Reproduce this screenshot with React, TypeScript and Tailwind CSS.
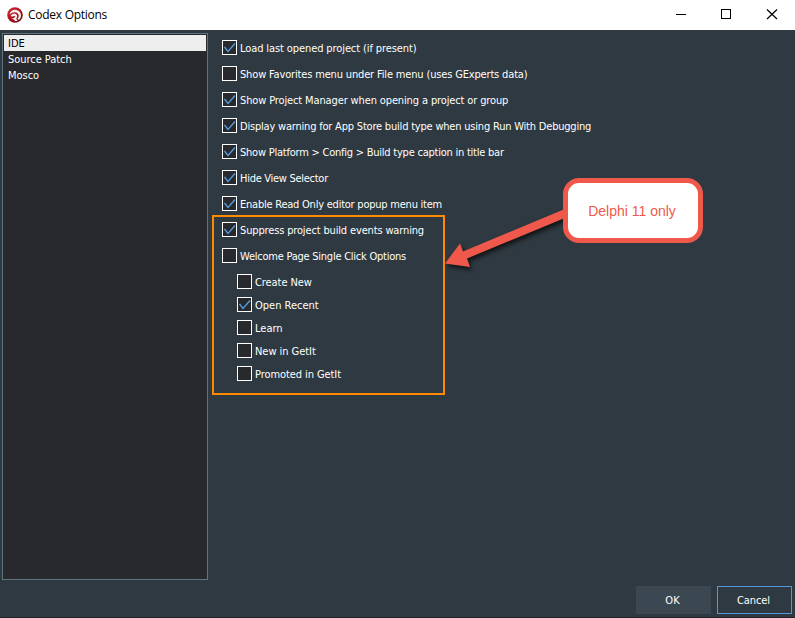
const TEXT = "font-['DejaVu_Sans_Condensed','DejaVu_Sans',sans-serif] [font-stretch:condensed]";

type Option = { label: string; checked?: boolean; tracking: string };

const options: Option[] = [
  { label: 'Load last opened project (if present)', checked: true, tracking: 'tracking-[-0.1px]' },
  { label: 'Show Favorites menu under File menu (uses GExperts data)', tracking: 'tracking-[-0.16px]' },
  { label: 'Show Project Manager when opening a project or group', checked: true, tracking: 'tracking-[-0.13px]' },
  { label: 'Display warning for App Store build type when using Run With Debugging', checked: true, tracking: 'tracking-[-0.2px]' },
  { label: 'Show Platform > Config > Build type caption in title bar', checked: true, tracking: 'tracking-[-0.23px]' },
  { label: 'Hide View Selector', checked: true, tracking: 'tracking-[-0.28px]' },
  { label: 'Enable Read Only editor popup menu item', checked: true, tracking: 'tracking-[-0.23px]' },
  { label: 'Suppress project build events warning', checked: true, tracking: 'tracking-[-0.15px]' },
  { label: 'Welcome Page Single Click Options', tracking: 'tracking-[-0.24px]' },
];

const welcomeOptions: Option[] = [
  { label: 'Create New', tracking: 'tracking-[-0.07px]' },
  { label: 'Open Recent', checked: true, tracking: 'tracking-[0px]' },
  { label: 'Learn', tracking: 'tracking-[0px]' },
  { label: 'New in GetIt', tracking: 'tracking-[-0.05px]' },
  { label: 'Promoted in GetIt', tracking: 'tracking-[-0.08px]' },
];

function Check({ label, checked, tracking }: Option) {
  return (
    <div className="flex h-[15px] items-center gap-[3px]">
      <span className="flex size-[15px] shrink-0 items-center justify-center border border-white bg-[#28292d]">
        {checked && (
          <svg width="13" height="13" viewBox="0 0 13 13" fill="none">
            <path d="M1.500 6 5 10.500 12 2.500" stroke="#559fe2" strokeWidth="1.300" />
          </svg>
        )}
      </span>
      <span className={`whitespace-nowrap pt-[2px] leading-[15px] ${tracking}`}>{label}</span>
    </div>
  );
}

function Logo() {
  return (
    <svg width="16" height="16" viewBox="0 0 16 16">
      <defs>
        <linearGradient id="badge" x1="0" y1="0" x2="1" y2="1">
          <stop offset="0" stopColor="#d52b38" />
          <stop offset="0.55" stopColor="#a80f1c" />
          <stop offset="1" stopColor="#5c0810" />
        </linearGradient>
      </defs>
      <circle cx="8" cy="8" r="7.8" fill="url(#badge)" />
      <path d="M2.400 7.400C3.200 3.800 6.700 2.200 9.800 3.100c3 .9 4.700 3.700 4.100 6.600-.3 1.400-1 2.500-1.900 3.300l-1.500-1.200c1.200-1.300 1.600-3 .8-4.500C10.300 5.500 8.400 4.900 6.500 5.400 4.800 5.800 3.400 6.600 2.400 7.400Z" fill="#f7eded" />
      <path d="M3.600 8.800 5.400 7.100 8 6.500l2 1.500.2 2.300-1.100 1.200 1.700 2.200-2.300.5-2.100-2-2.100-.4 2.500-.9 1.600-1.300-1.400-.7-2.100.9Z" fill="#f7eded" />
    </svg>
  );
}

export default function App() {
  return (
    <div className={`relative flex h-[618px] w-[795px] flex-col overflow-hidden border-b border-[#242226] bg-[#2f3941] text-[11px] text-white ${TEXT}`}>
      <header className="flex h-[30px] shrink-0 items-center bg-white pl-[7px] text-black">
        <Logo />
        <h1 className="ml-[5px] flex-1 font-['Open_Sans','Noto_Sans',sans-serif] text-[12px] tracking-[-0.27px] [font-stretch:normal]">Codex Options</h1>
        <svg width="120" height="30" viewBox="675 0 120 30" fill="none" stroke="#000">
          <path d="M676 14.500h10" />
          <rect x="721.500" y="9.500" width="9" height="9" />
          <path d="m767 9.500 10 9.500m0-9.500-10 9.500" strokeWidth="1.200" />
        </svg>
      </header>

      <div className="flex h-[550px] shrink-0 pl-[2px] pt-[3px]">
        <nav className="h-[547px] w-[206px] shrink-0 border border-[#60747f] bg-[#28292d] p-px leading-[18px] tracking-[-0.04px]">
          <div className="h-4 bg-[#eeeeee] pl-1 text-black">IDE</div>
          <div className="h-4 pl-1">Source Patch</div>
          <div className="h-4 pl-1">Mosco</div>
        </nav>
        <main className="pl-[14px] pt-[7px]">
          <div className="flex flex-col gap-[11px]">
            {options.map((o) => <Check key={o.label} {...o} />)}
          </div>
          <div className="flex flex-col gap-2 pl-[15px] pt-[11px]">
            {welcomeOptions.map((o) => <Check key={o.label} {...o} />)}
          </div>
        </main>
      </div>

      <footer className="flex justify-end gap-[6px] pr-[3px] pt-[6px]">
        <button className="h-7 w-[75px] bg-[#3b4751] pr-[2px] pt-[2px]">OK</button>
        <button className="h-7 w-[75px] border border-[#5596d8] pr-[2px] pt-[2px] tracking-[-0.1px]">Cancel</button>
      </footer>

      <div className="absolute left-[212px] top-[215px] h-[180px] w-[233px] border-2 border-[#ff8a00]" />
      <svg className="absolute left-[440px] top-[200px] drop-shadow-[2px_3px_2px_rgba(0,0,0,0.65)]" width="130" height="80" viewBox="440 200 130 80">
        <path d="M445 263.500 460 243.500 463 251.500 566 208.500 566 217.500 467 258.500 470 267Z" fill="#ef594b" />
      </svg>
      <div className="absolute left-[563px] top-[178px] flex h-[65px] w-[140px] items-center justify-center rounded-[16px] border-[5px] border-[#ef594b] bg-white pr-[2px] pt-[2px] font-['Liberation_Sans',sans-serif] text-[14px] text-[#ef594b]">
        Delphi 11 only
      </div>
    </div>
  );
}
